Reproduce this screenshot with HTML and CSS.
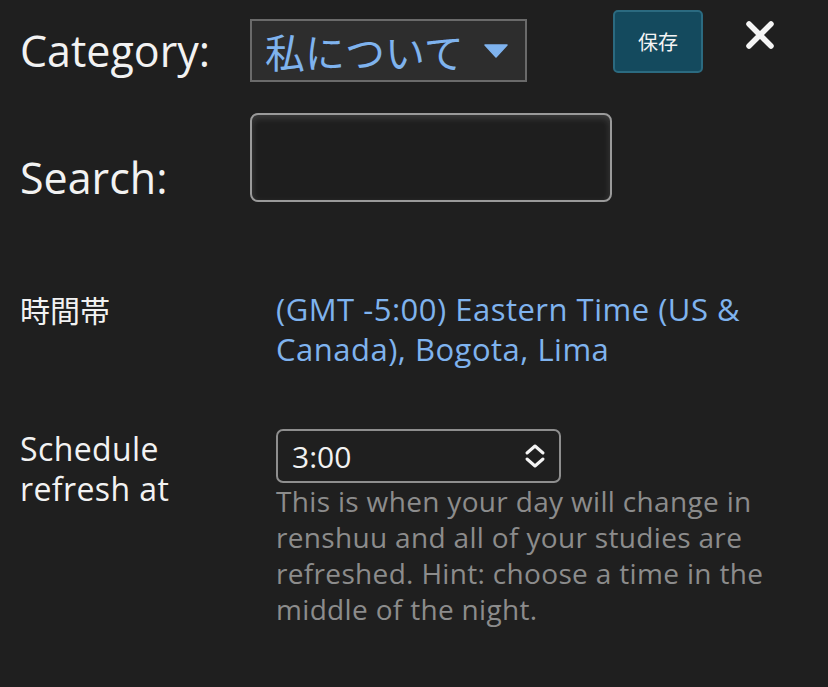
FILE: index.html
```html
<!DOCTYPE html>
<html lang="ja">

<head>
  <meta charset="UTF-8">
  <title>設定</title>
  <link rel="stylesheet" href="styles.css">
</head>

<body>
  <div class="head">
    <div class="filters">
      <div class="frow cat">
        <label class="flabel">Category:</label>
        <div class="catsel">
          <span>私について</span>
          <svg class="caret" width="24" height="14" viewBox="0 0 24 14"><path d="M1 1 H23 L12 13 Z" fill="#7fb3ee" stroke="#7fb3ee" stroke-width="1.5" stroke-linejoin="round"/></svg>
        </div>
      </div>
      <div class="frow search">
        <label class="flabel">Search:</label>
        <input class="searchbox" type="text">
      </div>
    </div>
    <button class="save">保存</button>
    <button class="close" aria-label="close">
      <svg width="30" height="28" viewBox="0 0 30 28"><path d="M4 3 L26 25 M26 3 L4 25" stroke="#f4f4f4" stroke-width="5.5" stroke-linecap="round"/></svg>
    </button>
  </div>

  <div class="settings">
    <div class="slabel tz">時間帯</div>
    <div class="svalue tzval">(GMT -5:00) Eastern Time (US &amp; Canada), Bogota, Lima</div>

    <div class="slabel refresh">Schedule refresh at</div>
    <div class="svalue">
      <div class="timesel">
        <span>3:00</span>
        <svg width="22" height="26" viewBox="0 0 22 26"><path d="M3 10 L11 3 L19 10 M3 16 L11 23 L19 16" fill="none" stroke="#f4f4f4" stroke-width="3" stroke-linecap="round" stroke-linejoin="round"/></svg>
      </div>
      <p class="hint">This is when your day will change in renshuu and all of your studies are refreshed. Hint: choose a time in the middle of the night.</p>
    </div>
  </div>
</body>

</html>
```

FILE: styles.css
```css
* {
  margin: 0;
  padding: 0;
  box-sizing: border-box;
}

body {
  background: #1f1f1f;
  color: #f2f2f2;
  font-family: "Open Sans", "Noto Sans CJK JP", sans-serif;
  padding: 10px 20px 0;
}

.head {
  display: flex;
  align-items: flex-start;
}

.filters {
  width: 592px;
}

.frow {
  display: flex;
}

.flabel {
  width: 230px;
  font-size: 43px;
  line-height: 49px;
}

.cat {
  margin-top: 9px;
  align-items: center;
}

.catsel {
  width: 277px;
  height: 63px;
  background: #2d2d2d;
  border: 2px solid #6a6a6a;
  display: flex;
  align-items: center;
  padding-left: 13px;
  color: #7fb3ee;
  font-family: "Noto Sans CJK JP", sans-serif;
  font-size: 40px;
}

.caret {
  margin-left: 20px;
}

.search {
  margin-top: 31px;
  align-items: flex-end;
}

.searchbox {
  width: 362px;
  height: 89px;
  background: #1e1e1e;
  border: 2px solid #9a9a9a;
  border-radius: 8px;
  box-shadow: inset 0 3px 7px rgba(255, 255, 255, 0.14);
  outline: none;
}

.save {
  margin-left: 1px;
  width: 90px;
  height: 63px;
  background: #144a5e;
  border: 2px solid #2b6a80;
  border-radius: 5px;
  color: #f4f4f4;
  font-family: "Noto Sans CJK JP", sans-serif;
  font-size: 20px;
}

.close {
  margin-left: 42px;
  margin-top: 11px;
  background: none;
  border: none;
  display: flex;
}

.settings {
  display: grid;
  grid-template-columns: 256px 1fr;
  row-gap: 60px;
  margin-top: 87px;
}

.slabel {
  font-size: 30px;
  line-height: 40px;
}

.tz {
  font-family: "Noto Sans CJK JP", sans-serif;
}

.refresh {
  font-size: 32px;
  letter-spacing: 0.4px;
  width: 190px;
}

.tzval {
  color: #7fb3ee;
  font-size: 31px;
  letter-spacing: 0.5px;
  line-height: 40px;
  max-width: 500px;
}

.timesel {
  width: 285px;
  height: 54px;
  border: 2px solid #8e8e8e;
  border-radius: 7px;
  display: flex;
  align-items: center;
  justify-content: space-between;
  padding: 0 13px 0 14px;
  font-size: 30px;
}

.hint {
  color: #8c8c8c;
  font-size: 28px;
  letter-spacing: 0.33px;
  line-height: 36px;
  width: 510px;
}
```
